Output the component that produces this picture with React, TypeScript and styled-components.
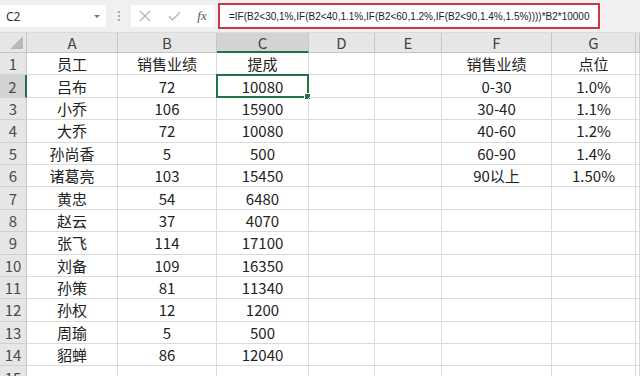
import React from 'react';
import styled, { createGlobalStyle } from 'styled-components';

const GlobalStyle = createGlobalStyle`
  html, body { margin: 0; padding: 0; background: #ffffff; }
  body {
    width: 640px;
    height: 376px;
    overflow: hidden;
    font-family: "Noto Sans CJK SC", "Noto Sans", sans-serif;
  }
`;

// Spaltenbreiten wie im Original (Zeilenkopf, A bis G, Rest für H)
const COLS = ['A', 'B', 'C', 'D', 'E', 'F', 'G', ''];
const COL_TEMPLATE = '27px 91px 99px 92px 66px 67px 110px 84px 1fr';
const ROW_H = 22.4;

const data: string[][] = [
  ['员工', '销售业绩', '提成', '', '', '销售业绩', '点位', ''],
  ['吕布', '72', '10080', '', '', '0-30', '1.0%', ''],
  ['小乔', '106', '15900', '', '', '30-40', '1.1%', ''],
  ['大乔', '72', '10080', '', '', '40-60', '1.2%', ''],
  ['孙尚香', '5', '500', '', '', '60-90', '1.4%', ''],
  ['诸葛亮', '103', '15450', '', '', '90以上', '1.50%', ''],
  ['黄忠', '54', '6480', '', '', '', '', ''],
  ['赵云', '37', '4070', '', '', '', '', ''],
  ['张飞', '114', '17100', '', '', '', '', ''],
  ['刘备', '109', '16350', '', '', '', '', ''],
  ['孙策', '81', '11340', '', '', '', '', ''],
  ['孙权', '12', '1200', '', '', '', '', ''],
  ['周瑜', '5', '500', '', '', '', '', ''],
  ['貂蝉', '86', '12040', '', '', '', '', ''],
  ['', '', '', '', '', '', '', ''],
];

const Page = styled.div`
  display: flex;
  flex-direction: column;
  width: 640px;
  height: 376px;
  overflow: hidden;
`;

const Toolbar = styled.div`
  display: flex;
  align-items: center;
  height: 32px;
  flex-shrink: 0;
  background: #f0f0f0;
  border-bottom: 1px solid #dcdcdc;
`;

const NameBox = styled.div`
  display: flex;
  align-items: center;
  justify-content: space-between;
  width: 94px;
  height: 22px;
  padding: 0 6px;
  background: #ffffff;
  font-family: "Noto Sans", sans-serif;
  font-size: 12px;
  color: #333;
`;

const Caret = styled.span`
  width: 0;
  height: 0;
  border-left: 3px solid transparent;
  border-right: 3px solid transparent;
  border-top: 3px solid #777;
`;

const Grip = styled.div`
  width: 25px;
  display: flex;
  flex-direction: column;
  align-items: center;
  gap: 2px;
  span {
    width: 2px;
    height: 2px;
    background: #aaa;
  }
`;

const FxBox = styled.div`
  display: flex;
  align-items: center;
  justify-content: space-around;
  width: 84px;
  height: 22px;
  background: #ffffff;
`;

const FxLabel = styled.span`
  font-family: "Liberation Serif", serif;
  font-style: italic;
  font-size: 13px;
  color: #555;
`;

const FormulaBar = styled.div`
  box-sizing: border-box;
  display: flex;
  align-items: center;
  width: 382px;
  height: 26px;
  margin-left: 3px;
  padding-left: 9px;
  background: #ffffff;
  border: 2px solid #c83845;
  font-family: "Liberation Sans", sans-serif;
  font-size: 10px;
  color: #222;
  white-space: nowrap;
  overflow: hidden;
`;

const Sheet = styled.div`
  display: grid;
  grid-template-columns: ${COL_TEMPLATE};
  grid-template-rows: 20px repeat(15, ${ROW_H}px);
  background: #ffffff;
`;

const Corner = styled.div`
  position: relative;
  background: #e6e6e6;
  border-right: 1px solid #c6c6c6;
  border-bottom: 1px solid #c6c6c6;
  &::after {
    content: '';
    position: absolute;
    right: 3px;
    bottom: 3px;
    width: 0;
    height: 0;
    border-left: 13px solid transparent;
    border-bottom: 13px solid #b9b9b9;
  }
`;

const ColHead = styled.div<{ $active?: boolean }>`
  display: flex;
  align-items: center;
  justify-content: center;
  background: ${p => (p.$active ? '#d3d3d3' : '#e6e6e6')};
  border-right: 1px solid #c6c6c6;
  border-bottom: ${p => (p.$active ? '2px solid #217346' : '1px solid #c6c6c6')};
  font-size: 15px;
  color: #444;
`;

const RowHead = styled.div<{ $active?: boolean }>`
  display: flex;
  align-items: center;
  justify-content: center;
  background: ${p => (p.$active ? '#d3d3d3' : '#e6e6e6')};
  border-right: ${p => (p.$active ? '2px solid #217346' : '1px solid #c6c6c6')};
  border-bottom: 1px solid #d0d0d0;
  font-size: 15px;
  color: #4a4a4a;
`;

const Cell = styled.div<{ $selected?: boolean }>`
  position: relative;
  display: flex;
  align-items: center;
  justify-content: center;
  border-right: 1px solid #dadada;
  border-bottom: 1px solid #dadada;
  font-size: 15px;
  color: #222;
  white-space: nowrap;
  ${p =>
    p.$selected &&
    `
    &::before {
      content: '';
      position: absolute;
      left: -1px;
      top: -1px;
      right: -1px;
      bottom: -1px;
      border: 2px solid #217346;
    }
    &::after {
      content: '';
      position: absolute;
      right: -3px;
      bottom: -3px;
      width: 5px;
      height: 5px;
      background: #217346;
      border: 1px solid #fff;
    }
  `}
`;

const XIcon = () => (
  <svg width="12" height="12" viewBox="0 0 12 12">
    <path d="M1 1 L11 11 M11 1 L1 11" stroke="#b5b5b5" strokeWidth="1.3" fill="none" />
  </svg>
);

const CheckIcon = () => (
  <svg width="13" height="12" viewBox="0 0 13 12">
    <path d="M1 6.5 L4.5 10 L12 2" stroke="#b5b5b5" strokeWidth="1.3" fill="none" />
  </svg>
);

export default function App() {
  return (
    <Page>
      <GlobalStyle />
      <Toolbar>
        <NameBox>
          <span>C2</span>
          <Caret />
        </NameBox>
        <Grip>
          <span />
          <span />
          <span />
        </Grip>
        <FxBox>
          <XIcon />
          <CheckIcon />
          <FxLabel>fx</FxLabel>
        </FxBox>
        <FormulaBar>=IF(B2&lt;30,1%,IF(B2&lt;40,1.1%,IF(B2&lt;60,1.2%,IF(B2&lt;90,1.4%,1.5%))))*B2*10000</FormulaBar>
      </Toolbar>
      <Sheet>
        <Corner />
        {COLS.map((c, i) => (
          <ColHead key={i} $active={c === 'C'}>
            {c}
          </ColHead>
        ))}
        {data.map((row, r) => (
          <React.Fragment key={r}>
            <RowHead $active={r === 1}>{r + 1}</RowHead>
            {row.map((v, c) => (
              <Cell key={c} $selected={r === 1 && c === 2}>
                {v}
              </Cell>
            ))}
          </React.Fragment>
        ))}
      </Sheet>
    </Page>
  );
}
